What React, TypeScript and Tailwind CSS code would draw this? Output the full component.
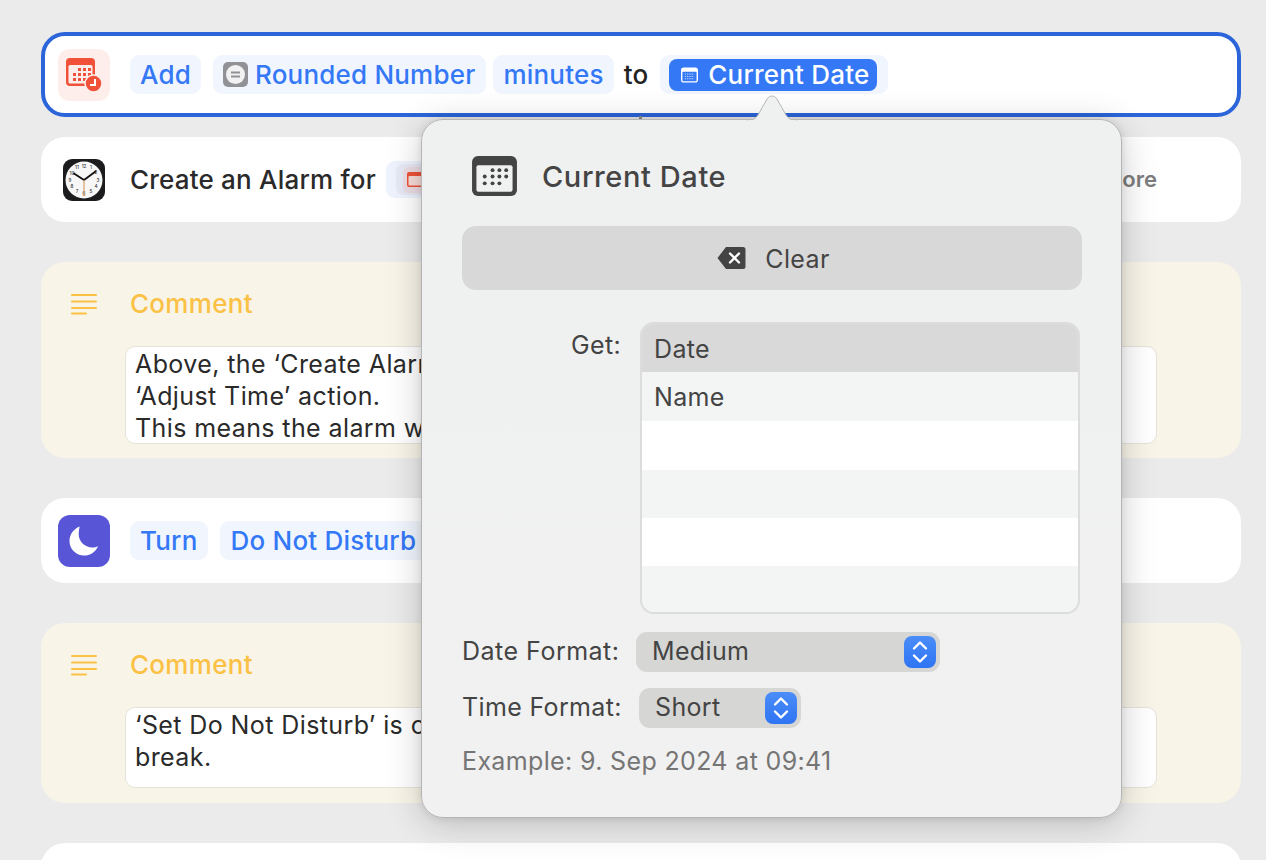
import React from 'react';

const font = "font-['Inter','Noto_Sans',sans-serif]";

const Pill = ({ children, className = '' }: { children: React.ReactNode; className?: string }) => (
  <span className={`flex items-center h-[39px] rounded-[9px] bg-[#f1f6fe] text-[#3478f6] text-[26px] tracking-[0.2px] font-medium whitespace-nowrap ${className}`}>
    {children}
  </span>
);

const CalendarClockIcon = () => (
  <div className="w-[52px] h-[52px] rounded-[12px] bg-[#fdeeeb] flex items-center justify-center shrink-0">
    <svg width="38" height="36" viewBox="0 0 38 36">
      <rect x="1" y="1" width="29" height="28" rx="4" fill="#f05138" />
      <rect x="3.500" y="8" width="24" height="18.500" rx="1.500" fill="#fdeeeb" />
      {[[13, 11], [18, 11], [23, 11], [8, 16], [13, 16], [18, 16], [23, 16], [8, 21], [13, 21], [18, 21]].map(([x, y]) => (
        <rect key={`${x}-${y}`} x={x} y={y} width="3" height="3" fill="#f05138" />
      ))}
      <circle cx="28.500" cy="26.500" r="8.500" fill="#f05138" stroke="#fdeeeb" strokeWidth="1.500" />
      <path d="M30 22v6h-5" fill="none" stroke="#fff" strokeWidth="2" />
    </svg>
  </div>
);

const ClockIcon = () => (
  <svg width="42" height="42" viewBox="0 0 42 42" className="shrink-0 ml-[5px] mr-[5px]">
    <rect width="42" height="42" rx="9" fill="#1c1c1e" />
    <circle cx="21" cy="21" r="18.500" fill="#f7f7f7" />
    {[['12', 21, 8.5], ['1', 28, 10], ['2', 33, 15], ['3', 35, 22.5], ['4', 33, 29], ['5', 28, 34], ['6', 21, 36], ['7', 14, 34], ['8', 9, 29], ['9', 7, 22.5], ['10', 9, 15.5], ['11', 14, 10]].map(([t, x, y]) => (
      <text key={t as string} x={x as number} y={y as number} fontSize="4.600" textAnchor="middle" fill="#333" fontFamily="Inter, sans-serif">{t}</text>
    ))}
    <path d="M21 21 L11 14.500 M21 21 L32.500 12.500" stroke="#111" strokeWidth="1.800" strokeLinecap="round" />
    <path d="M21 21 V34" stroke="#d9a066" strokeWidth="1.200" />
    <circle cx="21" cy="36" r="1.200" fill="#d9a066" />
  </svg>
);

const CommentIcon = () => (
  <svg width="26" height="22" viewBox="0 0 26 22" className="shrink-0 mr-[33px] ml-[13px]">
    <path d="M1 2h24M1 8.500h24M1 15h24M1 20.500h14" stroke="#fbc144" strokeWidth="2" strokeLinecap="round" />
  </svg>
);

const Comment = ({ className, children }: { className: string; children: React.ReactNode }) => (
  <div className={`rounded-[24px] bg-[#f8f4e8] pl-[17px] pr-[84px] flex flex-col ${className}`}>
    <div className="flex items-center pt-[31px]">
      <CommentIcon />
      <span className="text-[26px] tracking-[0.3px] leading-[22px] font-medium text-[#fbc144]">Comment</span>
    </div>
    <div className="mt-[31px] ml-[67px] rounded-[10px] bg-white border border-[#e6e3da] pl-[9px] pr-[10px] pt-[1px] text-[25px] tracking-[0.4px] leading-[32px] text-[#2a2a2a] overflow-hidden whitespace-nowrap">
      {children}
    </div>
  </div>
);

const Stepper = () => (
  <span className="w-[32px] h-[32px] rounded-[8px] bg-gradient-to-b from-[#4b8df8] to-[#2f74f3] flex items-center justify-center shrink-0">
    <svg width="18" height="26" viewBox="0 0 18 26">
      <path d="M3 9.500 9 3.500l6 6M3 16.500l6 6 6-6" fill="none" stroke="#fff" strokeWidth="2.400" strokeLinecap="round" strokeLinejoin="round" />
    </svg>
  </span>
);

const rows = ['bg-[#d9d9d9] h-[48px] pt-[3px]', 'bg-[#f3f5f4] h-[49px] pt-[2px]', 'bg-white h-[49px]', 'bg-[#f3f5f4] h-[48px]', 'bg-white h-[48px]', 'bg-[#f3f5f4] flex-1'];
const rowLabels = ['Date', 'Name'];

const Popover = () => (
  <div className="absolute left-[421px] top-[119px] w-[701px] h-[699px] rounded-[22px] bg-gradient-to-b from-[#eff0f0] to-[#f1f1f1] border border-[#b5b5b5] shadow-[0_6px_36px_rgba(0,0,0,0.2),0_0_8px_rgba(0,0,0,0.1)] pl-[40px] pr-[39px] pt-[1px] text-[#444444] text-[25px] tracking-[0.35px]">
    <svg width="70" height="28" viewBox="0 0 70 28" className="absolute left-[315px] top-[-26px]">
      <path d="M10.500 26.500 C16 26.500 18 25 21 21 L30 5 C33 1 37 1 40 5 L49 21 C52 25 54 26.500 59.500 26.500" fill="#eff0f0" stroke="#b5b5b5" strokeWidth="1" />
      <rect x="11" y="26" width="48" height="2" fill="#eff0f0" />
    </svg>
    <div className="flex items-center h-[105px] pl-[10px]">
      <svg width="45" height="41" viewBox="0 0 46 42" className="shrink-0 mt-[6px]">
        <rect width="46" height="41" rx="6" fill="#444444" />
        <rect x="4.500" y="9.500" width="37" height="27" rx="2" fill="#f0f1f1" />
        {[[21, 14.5], [28, 14.5], [35, 14.5], [13, 21], [21, 21], [28, 21], [35, 21], [13, 28], [21, 28], [28, 28]].map(([x, y]) => (
          <circle key={`${x}-${y}`} cx={x} cy={y} r="2" fill="#444444" />
        ))}
      </svg>
      <span className="ml-[25px] mt-[6px] text-[29px] tracking-[0.6px] font-medium">Current Date</span>
    </div>
    <div className="h-[64px] rounded-[14px] bg-[#d8d8d8] flex items-center justify-center pl-[3px]">
      <svg width="29" height="24" viewBox="0 0 29 24" className="mr-[19px]">
        <path d="M9 1h17a2.500 2.500 0 0 1 2.500 2.500v17A2.500 2.500 0 0 1 26 23H9L0.500 12z" fill="#444444" />
        <path d="M13 7.500l9 9M22 7.500l-9 9" stroke="#fff" strokeWidth="2.400" strokeLinecap="round" />
      </svg>
      <span className="pt-[3px]">Clear</span>
    </div>
    <div className="flex mt-[32px]">
      <span className="w-[159px] text-right leading-[47px]">Get:</span>
      <div className="ml-[19px] w-[440px] h-[292px] rounded-[14px] border-2 border-[#dcdcdc] overflow-hidden flex flex-col">
        {rows.map((r, i) => (
          <div key={r + i} className={`${r} pl-[12px] flex items-center`}>{rowLabels[i]}</div>
        ))}
      </div>
    </div>
    <div className="flex items-center mt-[18px] h-[40px]">
      <span className="w-[174px] tracking-[0.5px]">Date Format:</span>
      <div className="w-[304px] h-[40px] rounded-[11px] bg-[#d6d6d4] flex items-center justify-between pl-[16px] pr-[4px]">
        <span>Medium</span>
        <Stepper />
      </div>
    </div>
    <div className="flex items-center mt-[16px] h-[40px]">
      <span className="w-[177px]">Time Format:</span>
      <div className="w-[162px] h-[40px] rounded-[11px] bg-[#d6d6d4] flex items-center justify-between pl-[16px] pr-[4px]">
        <span>Short</span>
        <Stepper />
      </div>
    </div>
    <div className="mt-[17px] text-[#757575] leading-[32px]">Example: 9. Sep 2024 at 09:41</div>
  </div>
);

export default function App() {
  return (
    <div className={`relative h-[860px] overflow-hidden bg-[#ebebeb] pl-[41px] pr-[25px] pt-[32px] ${font}`}>
      <div className="h-[85px] rounded-[24px] bg-white border-4 border-[#2b65d9] flex items-center pl-[13px] text-[#222222] text-[26px] tracking-[0.2px]">
        <span className="mr-[20px]"><CalendarClockIcon /></span>
        <Pill className="px-[10px]">Add</Pill>
        <Pill className="ml-[12px] h-[32px] pl-[10px] pr-[11px] gap-[7px]">
          <svg width="25" height="25" viewBox="0 0 25 25" className="shrink-0">
            <rect width="25" height="25" rx="5" fill="#929296" />
            <circle cx="12.500" cy="12.500" r="9.500" fill="#f2f2f2" />
            <path d="M8 10.500h9M8 14.500h9" stroke="#929296" strokeWidth="1.800" />
          </svg>
          Rounded Number
        </Pill>
        <Pill className="ml-[7px] px-[10px]">minutes</Pill>
        <span className="ml-[10px] font-medium">to</span>
        <span className="ml-[12px] flex items-center h-[39px] rounded-[9px] bg-[#f1f6fe] pl-[9px] pr-[11px]">
          <span className="flex items-center h-[32px] rounded-[8px] bg-[#3478f6] pl-[12px] pr-[8px] gap-[10px] text-white font-medium whitespace-nowrap">
            <svg width="17" height="16" viewBox="0 0 18 16" className="shrink-0">
              <rect width="18" height="16" rx="3" fill="#fff" />
              <rect x="1.500" y="4.500" width="15" height="10" rx="1" fill="#3478f6" />
              <path d="M4 7h10M4 9.500h10M4 12h10" stroke="#cfe0fd" strokeWidth="1" strokeDasharray="1.400 1" />
            </svg>
            Current Date
          </span>
        </span>
      </div>

      <div className="relative mt-[20px] h-[85px] rounded-[24px] bg-white flex items-center pl-[17px] pr-[84px] text-[26px] font-medium text-[#2a2a2a]">
        <ClockIcon />
        <span className="ml-[20px] whitespace-nowrap tracking-[0.2px]">Create an Alarm for</span>
        <span className="ml-[10px] flex items-center h-[37px] w-[100px] rounded-[9px] bg-[#eef3fd] pl-[10px]">
          <span className="flex items-center h-[31px] w-[80px] rounded-[8px] bg-[#e7e9f6] pl-[7px]">
            <span className="flex items-center justify-center w-[26px] h-[26px] rounded-[6px] bg-[#ecdde3]">
              <svg width="18" height="16" viewBox="0 0 18 16">
                <rect width="18" height="15" rx="2" fill="#f05138" />
                <rect x="1.500" y="4" width="15" height="9.500" rx="1" fill="#f8dcd8" />
              </svg>
            </span>
          </span>
        </span>
        <span className="ml-auto text-[22px] text-[#7d7d7d] font-semibold whitespace-nowrap">Show More</span>
      </div>

      <Comment className="mt-[40px] h-[196px]">
        <div className="h-[95px]">
          Above, the ‘Create Alarm’ action uses the time from the<br />
          ‘Adjust Time’ action.<br />
          This means the alarm will go off when the break ends.
        </div>
      </Comment>

      <div className="mt-[40px] h-[85px] rounded-[24px] bg-white flex items-center pl-[17px]">
        <div className="w-[52px] h-[52px] rounded-[12px] bg-[#5856d6] flex items-center justify-center mr-[20px] shrink-0">
          <svg width="32" height="32" viewBox="0 0 32 32">
            <path d="M11 1.500C4.600 4 .5 10 .5 16.500c0 8.400 6.800 15 15 15 6.200 0 11.800-3.700 14.500-9.700-1.800.9-3.800 1.300-6 1.300-8 0-14-6.400-14-13.600 0-3 .5-5.700 1-8z" fill="#fff" transform="translate(1 0) scale(.97)" />
          </svg>
        </div>
        <Pill className="px-[10px]">Turn</Pill>
        <Pill className="ml-[12px] px-[11px]">Do Not Disturb</Pill>
      </div>

      <Comment className="mt-[40px] h-[180px]">
        <div className="h-[78px]">
          ‘Set Do Not Disturb’ is on while the timer runs, so notifications stay silent in your<br />
          break.
        </div>
      </Comment>

      <div className="mt-[40px] h-[85px] rounded-[24px] bg-white" />

      <div className="absolute left-[639px] top-[116px] w-[3px] h-[6px] bg-[#8a8a8a]" />
      <Popover />
    </div>
  );
}
